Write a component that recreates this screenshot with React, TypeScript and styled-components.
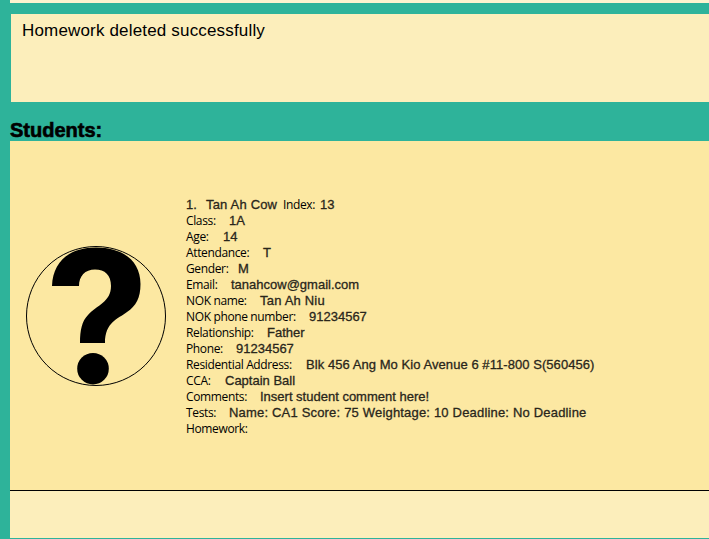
import React from "react";
import styled, { createGlobalStyle } from "styled-components";

const GlobalStyle = createGlobalStyle`
  body { margin: 0; overflow: hidden; background: #2eb39a; }
  * { box-sizing: border-box; }
`;

const Page = styled.main`
  height: 539px;
  padding-left: 10px;
  display: flex;
  flex-direction: column;
  background: #2eb39a;
  color: #000;
  font-family: "Liberation Sans", Arial, sans-serif;
  overflow: hidden;
`;

const CommandStrip = styled.div`
  flex: 0 0 3px;
  background: #fdf3cf;
`;

const Message = styled.section`
  flex: 0 0 88px;
  margin: 11px 0 0 1px;
  padding: 6px 11px;
  background: #fceebb;
  font-size: 17px;
  line-height: 21px;
  letter-spacing: 0.17px;
  white-space: nowrap;
`;

const Heading = styled.h2`
  flex: 0 0 39px;
  margin: 0;
  padding-top: 17px;
  font-size: 20px;
  line-height: 22px;
  font-weight: 700;
  -webkit-text-stroke: 0.6px #000;
`;

const Card = styled.article`
  flex: 0 0 350px;
  display: flex;
  align-items: center;
  gap: 20px;
  padding-left: 16px;
  background: #fce8a2;
  border-bottom: 1px solid #000;
`;

const Avatar = styled.svg`
  flex: none;
  width: 140px;
  height: 140px;
`;

const Details = styled.div`
  padding-top: 2px;
`;

const Row = styled.div`
  display: flex;
  height: 16px;
  align-items: baseline;
  line-height: 16px;
  white-space: pre;
`;

const Label = styled.span<{ $width: number }>`
  flex: none;
  width: ${(p) => p.$width}px;
  font-family: "Open Sans", "Noto Sans", sans-serif;
  font-size: 12px;
  letter-spacing: -0.36px;
`;

const Value = styled.span<{ $width?: number; $spacing?: number }>`
  flex: none;
  width: ${(p) => (p.$width ? `${p.$width}px` : "auto")};
  font-size: 13px;
  letter-spacing: ${(p) => p.$spacing ?? 0}px;
  color: #29261b;
  -webkit-text-stroke: 0.3px #29261b;
`;

const Footer = styled.div`
  flex: 0 0 47px;
  background: #fceebb;
`;

const fields: { label: string; width: number; value: string; spacing?: number }[] = [
  { label: "Class:", width: 43, value: "1A" },
  { label: "Age:", width: 37, value: "14" },
  { label: "Attendance:", width: 77, value: "T" },
  { label: "Gender:", width: 52, value: "M" },
  { label: "Email:", width: 45, value: "tanahcow@gmail.com" },
  { label: "NOK name:", width: 74, value: "Tan Ah Niu", spacing: 0.2 },
  { label: "NOK phone number:", width: 123, value: "91234567" },
  { label: "Relationship:", width: 81, value: "Father" },
  { label: "Phone:", width: 50, value: "91234567" },
  {
    label: "Residential Address:",
    width: 120,
    value: "Blk 456 Ang Mo Kio Avenue 6 #11-800 S(560456)",
    spacing: 0.06,
  },
  { label: "CCA:", width: 39, value: "Captain Ball" },
  { label: "Comments:", width: 74, value: "Insert student comment here!" },
  {
    label: "Tests:",
    width: 43,
    value: "Name: CA1 Score: 75 Weightage: 10 Deadline: No Deadline",
    spacing: 0.185,
  },
  { label: "Homework:", width: 74, value: "" },
];

export default function App() {
  return (
    <>
      <GlobalStyle />
      <Page>
        <CommandStrip />
        <Message>Homework deleted successfully</Message>
        <Heading>Students:</Heading>
        <Card>
          <Avatar viewBox="0 0 140 140" aria-label="No photo">
            <circle cx="70" cy="70" r="69.5" fill="none" stroke="#000" />
            <path d="M26 40 C27 15 44 1.5 70 1.5 C97 1.5 114.5 15 114.5 38 C114.5 52 110 60 101 66 C92 73 79 76 79 97 H54 C54 84 56 75 62 69 C71 59 85 56 85 40 C85 29 79 23.5 69 23.5 C59 23.5 53 30 53 40 Z" />
            <circle cx="67" cy="122.7" r="15.8" />
          </Avatar>
          <Details>
            <Row>
              <Value $width={20}>1.</Value>
              <Value $width={77} $spacing={0.18}>Tan Ah Cow</Value>
              <Label $width={37}>Index:</Label>
              <Value>13</Value>
            </Row>
            {fields.map((f) => (
              <Row key={f.label}>
                <Label $width={f.width}>{f.label}</Label>
                <Value $spacing={f.spacing}>{f.value}</Value>
              </Row>
            ))}
          </Details>
        </Card>
        <Footer />
      </Page>
    </>
  );
}
